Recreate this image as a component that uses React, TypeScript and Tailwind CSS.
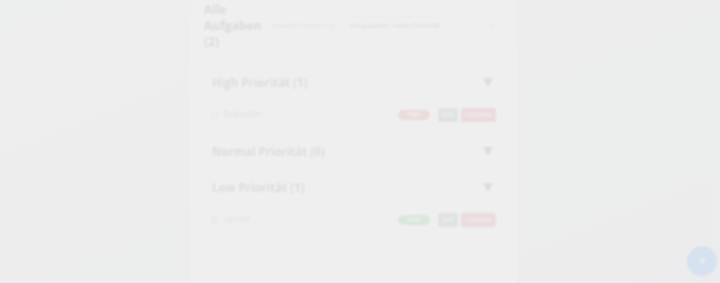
import React from "react";

type Task = { id: number; title: string; priority: "High" | "Normal" | "Low" };

export default function App() {
  const tasks: Task[] = [
    { id: 1, title: "Einkaufen", priority: "High" },
    { id: 2, title: "Lernen", priority: "Low" },
  ];
  const groups: Task["priority"][] = ["High", "Normal", "Low"];

  return (
    <div className="relative min-h-screen overflow-hidden bg-gradient-to-br from-[#eaf7ee] via-[#e3e4e4] to-[#dde2ee] font-['Open_Sans',sans-serif]">
      <div className="ml-[189px] min-h-screen w-[328px] bg-white px-[15px] pt-[2px] shadow-md">
        {/** Kopfzeile */}
        <div className="flex items-center">
          <h1 className="w-[58px] text-[12px] font-bold leading-[16px] text-[#333]">
            Alle Aufgaben (2)
          </h1>
          <span className="ml-[9px] text-[7.4px] text-[#777]">Ansicht/Sortierung:</span>
          <div className="ml-[5px] flex h-[18px] flex-1 items-center justify-between rounded-[3px] border border-[#ddd] pl-[7px] pr-[5px] font-['Liberation_Sans',sans-serif] text-[8px] text-[#444]">
            <span>Gruppieren nach Priorität</span>
            <svg width="6" height="4" viewBox="0 0 6 4">
              <path d="M0.5 0.5 L3 3 L5.5 0.5" fill="none" stroke="#555" strokeWidth="1" />
            </svg>
          </div>
        </div>

        {/** Gruppen */}
        <div className="mt-[22px] flex flex-col">
          {groups.map((g) => {
            const list = tasks.filter((t) => t.priority === g);
            return (
              <div key={g} className="mb-[15px]">
                <div className="ml-px mr-[3px] flex h-[21px] items-center justify-between rounded-[3px] border border-[#e6e6e6] pl-[6px] pr-[5px]">
                  <span className="text-[11.5px] font-bold text-[#444]">
                    {g} Priorität ({list.length})
                  </span>
                  <svg width="10" height="9" viewBox="0 0 10 9">
                    <polygon points="0,0 10,0 5,9" fill="#444" />
                  </svg>
                </div>
                {list.map((t) => (
                  <div
                    key={t.id}
                    className="mt-[10px] flex h-[23px] items-center rounded-[3px] border border-[#e6e6e6] pl-[7px] pr-[5px]"
                  >
                    <span className="h-[6px] w-[6px] rounded-[1px] border border-[#888]" />
                    <span className="ml-[5px] text-[8.5px] text-[#555]">{t.title}</span>
                    <span
                      className={
                        "ml-auto flex h-[10px] w-[32px] items-center justify-center rounded-full text-[6px] font-bold text-white " +
                        (t.priority === "High" ? "bg-[#dc3545]" : "bg-[#28a745]")
                      }
                    >
                      {t.priority}
                    </span>
                    <button className="ml-[8px] h-[14px] w-[20px] rounded-[2px] bg-[#6c757d] text-[6.5px] font-semibold text-white">
                      Edit
                    </button>
                    <button className="ml-[3px] h-[14px] w-[35px] rounded-[2px] bg-[#dc3545] text-[6.5px] font-semibold text-white">
                      Löschen
                    </button>
                  </div>
                ))}
              </div>
            );
          })}
        </div>
      </div>

      {/** Neue Aufgabe */}
      <button className="absolute bottom-[7px] right-[3px] flex h-[30px] w-[30px] items-center justify-center rounded-full bg-[#007bff] text-[16px] text-white shadow">
        +
      </button>

      {/** Hintergrund des Dialogs */}
      <div className="fixed inset-0 bg-[#ededed]/90 backdrop-blur-[1px]" />
    </div>
  );
}
